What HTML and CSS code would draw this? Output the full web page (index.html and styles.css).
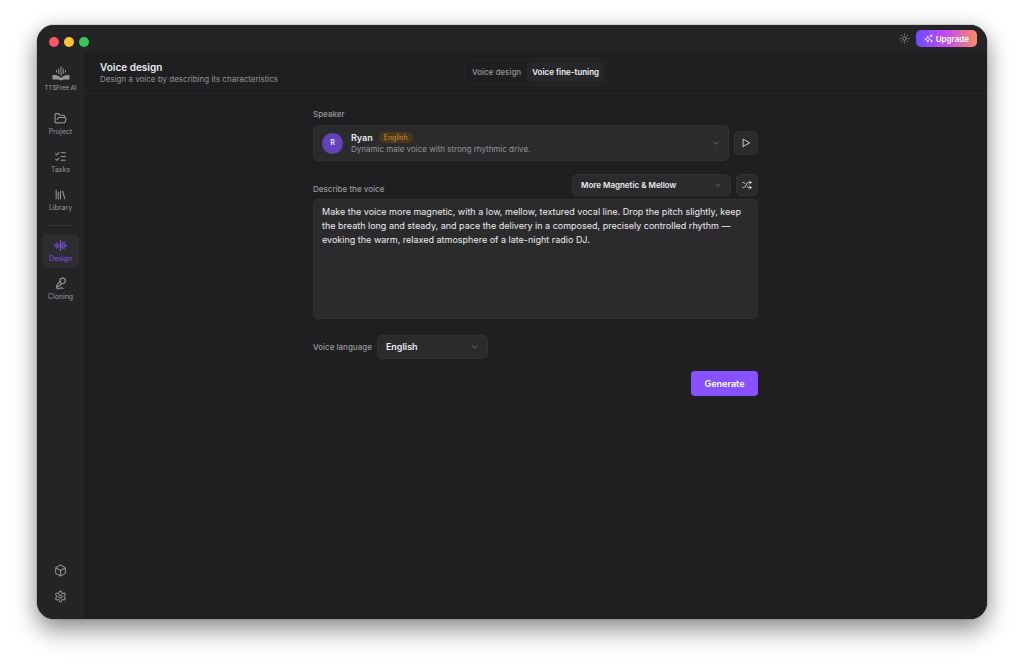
FILE: index.html
```html
<!DOCTYPE html>
<html lang="en">
<head>
<meta charset="utf-8">
<meta name="viewport" content="width=device-width, initial-scale=1">
<title>TTSFree AI</title>
<link rel="stylesheet" href="styles.css">
</head>
<body>
<div class="window">
  <div class="titlebar">
    <div class="lights"><span class="light red"></span><span class="light yellow"></span><span class="light green"></span></div>
    <div class="titlebar-actions">
      <button class="icon-button" type="button" aria-label="Toggle theme">
        <svg class="icon theme" viewBox="0 0 24 24"><circle cx="12" cy="12" r="4"/><path d="M12 2v2M12 20v2M4.9 4.9l1.4 1.4M17.7 17.7l1.4 1.4M2 12h2M20 12h2M6.3 17.7l-1.4 1.4M19.1 4.9l-1.4 1.4"/></svg>
      </button>
      <button class="upgrade" type="button">
        <svg class="icon spark" viewBox="0 0 24 24"><path d="M10 6l1.600 5.400L17 14l-5.400 2.200L10 22l-2.400-5.800L2 14l5.600-2.600z"/><path d="M19 2v6M16 5h6M20 17v4M18 19h4"/></svg>
        Upgrade
      </button>
    </div>
  </div>
  <div class="body">
    <nav class="sidebar">
      <div class="brand">
        <svg class="logo" viewBox="0 0 36 30"><path class="logo-bars" d="M9 9v3M13.500 6v9M18 2v17M22.500 6v9M27 9v3"/><path class="logo-book" d="M1 18c7-1 13 1 17 6 4-5 10-7 17-6v9H23c-2 0-3 2-5 2s-3-2-5-2H1z"/></svg>
        <span>TTSFree AI</span>
      </div>
      <a class="nav-item" href="#project">
        <svg class="icon nav-icon" viewBox="0 0 24 24"><path d="m6 14 1.500-2.900A2 2 0 0 1 9.240 10H20a2 2 0 0 1 1.940 2.500l-1.540 6a2 2 0 0 1-1.950 1.500H4a2 2 0 0 1-2-2V5a2 2 0 0 1 2-2h3.900a2 2 0 0 1 1.690.900l.810 1.200a2 2 0 0 0 1.670.900H18a2 2 0 0 1 2 2v2"/></svg>
        <span>Project</span>
      </a>
      <a class="nav-item" href="#tasks">
        <svg class="icon nav-icon" viewBox="0 0 24 24"><path d="M13 5h8M13 12h8M13 19h8M3 17l2 2 4-4M3 7l2 2 4-4"/></svg>
        <span>Tasks</span>
      </a>
      <a class="nav-item" href="#library">
        <svg class="icon nav-icon" viewBox="0 0 24 24"><path d="m16 6 4 14M12 6v14M8 8v12M4 4v16"/></svg>
        <span>Library</span>
      </a>
      <hr class="divider">
      <a class="nav-item active" href="#design" aria-current="page">
        <svg class="icon nav-icon" viewBox="0 0 24 24"><path d="M2 10v4M5.300 7v10M8.700 10v5M12 3v18M15.300 7v10M18.700 5v13M22 10v4"/></svg>
        <span>Design</span>
      </a>
      <a class="nav-item" href="#cloning">
        <svg class="icon nav-icon" viewBox="0 0 24 24"><path d="m11 7.601-5.994 8.190a1 1 0 0 0 .100 1.298l.817.818a1 1 0 0 0 1.314.087L15.090 12"/><path d="M16.500 21.174C15.500 20.500 14.372 20 13 20c-2.058 0-3.928 2.356-6 2-2.072-.356-2.775-3.369-1.500-4.500"/><circle cx="16" cy="7" r="5"/></svg>
        <span>Cloning</span>
      </a>
      <div class="sidebar-foot">
        <button class="icon-button" type="button" aria-label="Models">
          <svg class="icon foot-icon" viewBox="0 0 24 24"><path d="M21 8a2 2 0 0 0-1-1.730l-7-4a2 2 0 0 0-2 0l-7 4A2 2 0 0 0 3 8v8a2 2 0 0 0 1 1.730l7 4a2 2 0 0 0 2 0l7-4A2 2 0 0 0 21 16zM3.300 7l8.700 5 8.700-5M12 22V12"/></svg>
        </button>
        <button class="icon-button" type="button" aria-label="Settings">
          <svg class="icon foot-icon" viewBox="0 0 24 24"><path d="M12.220 2h-.440a2 2 0 0 0-2 2v.180a2 2 0 0 1-1 1.730l-.430.250a2 2 0 0 1-2 0l-.150-.080a2 2 0 0 0-2.730.730l-.220.380a2 2 0 0 0 .730 2.730l.150.100a2 2 0 0 1 1 1.720v.510a2 2 0 0 1-1 1.740l-.150.090a2 2 0 0 0-.730 2.730l.220.380a2 2 0 0 0 2.730.730l.150-.080a2 2 0 0 1 2 0l.430.250a2 2 0 0 1 1 1.730V20a2 2 0 0 0 2 2h.440a2 2 0 0 0 2-2v-.180a2 2 0 0 1 1-1.730l.430-.250a2 2 0 0 1 2 0l.150.080a2 2 0 0 0 2.730-.730l.220-.390a2 2 0 0 0-.730-2.730l-.150-.080a2 2 0 0 1-1-1.740v-.500a2 2 0 0 1 1-1.740l.150-.090a2 2 0 0 0 .730-2.730l-.220-.380a2 2 0 0 0-2.730-.730l-.150.080a2 2 0 0 1-2 0l-.430-.250a2 2 0 0 1-1-1.730V4a2 2 0 0 0-2-2z"/><circle cx="12" cy="12" r="3"/></svg>
        </button>
      </div>
    </nav>
    <main class="main">
      <header class="header">
        <div class="heading">
          <h1>Voice design</h1>
          <p>Design a voice by describing its characteristics</p>
        </div>
        <div class="tabs" role="tablist">
          <button class="tab" type="button" role="tab" aria-selected="false">Voice design</button>
          <button class="tab selected" type="button" role="tab" aria-selected="true">Voice fine-tuning</button>
        </div>
      </header>
      <form class="form">
        <span class="label" id="speaker-label">Speaker</span>
        <div class="speaker-row">
          <button class="speaker" type="button" aria-haspopup="listbox" aria-labelledby="speaker-label speaker-name">
            <span class="avatar">R</span>
            <span class="speaker-info">
              <span class="speaker-title"><span class="speaker-name" id="speaker-name">Ryan</span><span class="badge">English</span></span>
              <span class="speaker-text">Dynamic male voice with strong rhythmic drive.</span>
            </span>
            <svg class="icon chevron" viewBox="0 0 24 24"><path d="m5 9 7 7 7-7"/></svg>
          </button>
          <button class="square play" type="button" aria-label="Play sample">
            <svg class="icon tool-icon" viewBox="0 0 24 24"><path d="M5 3.500v17L20 12z"/></svg>
          </button>
        </div>
        <div class="describe-row">
          <label class="label" for="description">Describe the voice</label>
          <div class="select-box preset">
            <select aria-label="Style preset"><option>More Magnetic &amp; Mellow</option></select>
            <svg class="icon chevron" viewBox="0 0 24 24"><path d="m5 9 7 7 7-7"/></svg>
          </div>
          <button class="square" type="button" aria-label="Shuffle">
            <svg class="icon tool-icon" viewBox="0 0 24 24"><path d="m18 14 4 4-4 4M18 2l4 4-4 4M2 18h2a4 4 0 0 0 3.300-1.700l5.500-8.600A4 4 0 0 1 16 6h6M2 6h2a4 4 0 0 1 3.600 2.200M22 18h-6a4 4 0 0 1-3.300-1.800l-.400-.600"/></svg>
          </button>
        </div>
        <textarea class="description" id="description">Make the voice more magnetic, with a low, mellow, textured vocal line. Drop the pitch slightly, keep the breath long and steady, and pace the delivery in a composed, precisely controlled rhythm — evoking the warm, relaxed atmosphere of a late-night radio DJ.</textarea>
        <div class="language-row">
          <label class="label" for="language">Voice language</label>
          <div class="select-box language">
            <select id="language"><option>English</option></select>
            <svg class="icon chevron" viewBox="0 0 24 24"><path d="m5 9 7 7 7-7"/></svg>
          </div>
        </div>
        <button class="generate" type="button">Generate</button>
      </form>
    </main>
  </div>
</div>
</body>
</html>
```
FILE: styles.css
```css
* { box-sizing: border-box; }
body {
  margin: 0;
  min-height: 100vh;
  display: flex;
  padding: 25px 37px 49px;
  background: #fff;
  font-family: Inter, "Liberation Sans", sans-serif;
  font-size: 9px;
  line-height: 14px;
  color: #ececee;
}
button, select, textarea { font: inherit; color: inherit; margin: 0; }
button { border: 0; padding: 0; background: none; cursor: pointer; }
.icon { display: block; flex: none; fill: none; stroke: currentColor; stroke-width: 2; stroke-linecap: round; stroke-linejoin: round; }

.window {
  flex: 1;
  display: flex;
  flex-direction: column;
  background: #242426;
  border-radius: 17px;
  overflow: hidden;
  box-shadow: 0 0 1px #000, 0 12px 24px rgba(0, 0, 0, .38), 0 2px 20px rgba(0, 0, 0, .14);
}
.titlebar { display: flex; justify-content: space-between; height: 27px; padding: 0 10px 0 12px; }
.lights { display: flex; gap: 5px; padding-top: 12px; }
.light { width: 10px; height: 10px; border-radius: 50%; }
.red { background: #fe5564; }
.yellow { background: #fbc430; }
.green { background: #36c759; }
.titlebar-actions { display: flex; align-items: center; gap: 6px; }
.icon-button { color: #8e8e93; }
.theme { width: 11px; height: 11px; }
.upgrade {
  display: flex;
  align-items: center;
  gap: 3px;
  height: 17px;
  padding: 0 8px;
  border-radius: 5px;
  background: linear-gradient(90deg, #6d4aff, #c44cf0 50%, #fb8b62);
  color: #fff;
  font-size: 8px;
  font-weight: 600;
}
.spark { width: 9px; height: 9px; }

.body { flex: 1; display: flex; }
.sidebar { flex: none; width: 47px; display: flex; flex-direction: column; align-items: center; gap: 4px; padding: 14px 0 16px; color: #97979c; }
.brand { display: flex; flex-direction: column; align-items: center; gap: 3px; height: 37px; font-size: 6px; font-weight: 500; line-height: 8px; }
.logo { width: 18px; height: 15px; }
.logo-bars { fill: none; stroke: currentColor; stroke-width: 2; stroke-linecap: round; }
.logo-book { fill: currentColor; }
.nav-item {
  width: 37px;
  height: 34px;
  display: flex;
  flex-direction: column;
  align-items: center;
  justify-content: center;
  gap: 2px;
  border-radius: 5px;
  color: inherit;
  text-decoration: none;
  font-size: 7px;
  line-height: 10px;
}
.nav-icon { width: 13px; height: 13px; }
.active { background: #2d2d30; color: #7d53ea; }
.divider { width: 25px; height: 1px; margin: 4px 0; border: 0; background: #363639; }
.sidebar-foot { margin-top: auto; display: flex; flex-direction: column; gap: 13px; }
.foot-icon { width: 13px; height: 13px; }

.main { flex: 1; min-width: 0; background: #1f1f21; }
.header {
  display: grid;
  grid-template-columns: 1fr auto 1fr;
  align-items: center;
  min-height: 42px;
  padding: 0 16px;
  border-bottom: 1px solid #262628;
}
.heading { min-width: 0; white-space: nowrap; }
h1 { margin: 0; font-size: 10px; font-weight: 600; line-height: 13px; }
.heading p { margin: 0; font-size: 8px; line-height: 11px; color: #949499; }
.tabs { display: flex; gap: 1px; margin-bottom: 2px; padding: 2px; border: 1px solid #272729; border-radius: 5px; }
.tab { height: 20px; padding: 0 5px; border-radius: 4px; color: #949499; font-size: 8px; font-weight: 500; }
.selected { background: #272729; color: #f0f0f2; font-weight: 600; }

.form { max-width: 445px; margin: 0 auto; padding-top: 14px; display: flex; flex-direction: column; }
.label { font-size: 8px; line-height: 12px; font-weight: 500; color: #98989d; }
.speaker-row { display: flex; align-items: center; gap: 5px; margin-top: 5px; }
.speaker {
  flex: 1;
  display: flex;
  align-items: center;
  gap: 8px;
  height: 36px;
  padding: 0 8px;
  border: 1px solid #313134;
  border-radius: 5px;
  background: #2b2b2d;
  text-align: left;
}
.avatar { display: grid; place-items: center; width: 21px; height: 21px; border-radius: 50%; background: #6442be; font-size: 7px; font-weight: 600; }
.speaker-info { flex: 1; }
.speaker-title { display: flex; align-items: center; gap: 6px; }
.speaker-name { font-weight: 600; line-height: 12px; }
.badge { padding: 0 5px; border-radius: 6px; background: #493820; color: #cf8d2c; font-size: 7px; line-height: 11px; }
.speaker-text { display: block; font-size: 8px; line-height: 11px; color: #949499; }
.chevron { width: 8px; height: 8px; color: #929297; }
.square { flex: none; display: grid; place-items: center; width: 22px; height: 22px; border: 1px solid #313134; border-radius: 5px; background: #2b2b2d; }
.play { width: 24px; height: 24px; }
.tool-icon { width: 10px; height: 10px; }
.describe-row { display: flex; align-items: center; gap: 5px; margin-top: 13px; }
.describe-row .label { margin-right: auto; padding-top: 8px; }
.select-box { display: grid; align-items: center; }
.select-box select, .select-box .chevron { grid-area: 1 / 1; }
.select-box .chevron { justify-self: end; margin-right: 9px; pointer-events: none; }
.select-box select { appearance: none; width: 100%; height: 24px; padding: 0 8px; border: 1px solid #313134; border-radius: 5px; background: #2b2b2d; font-weight: 600; }
.preset { width: 159px; }
.preset select { height: 22px; font-size: 8px; }
.description { height: 120px; margin-top: 3px; padding: 5px 8px; border: 1px solid #313134; border-radius: 5px; background: #2b2b2d; resize: none; }
.language-row { display: flex; align-items: center; gap: 5px; margin-top: 16px; }
.language { width: 111px; }
.generate { align-self: flex-end; width: 67px; height: 25px; margin-top: 12px; border-radius: 4px; background: #8652ff; color: #fff; font-weight: 600; }
```
